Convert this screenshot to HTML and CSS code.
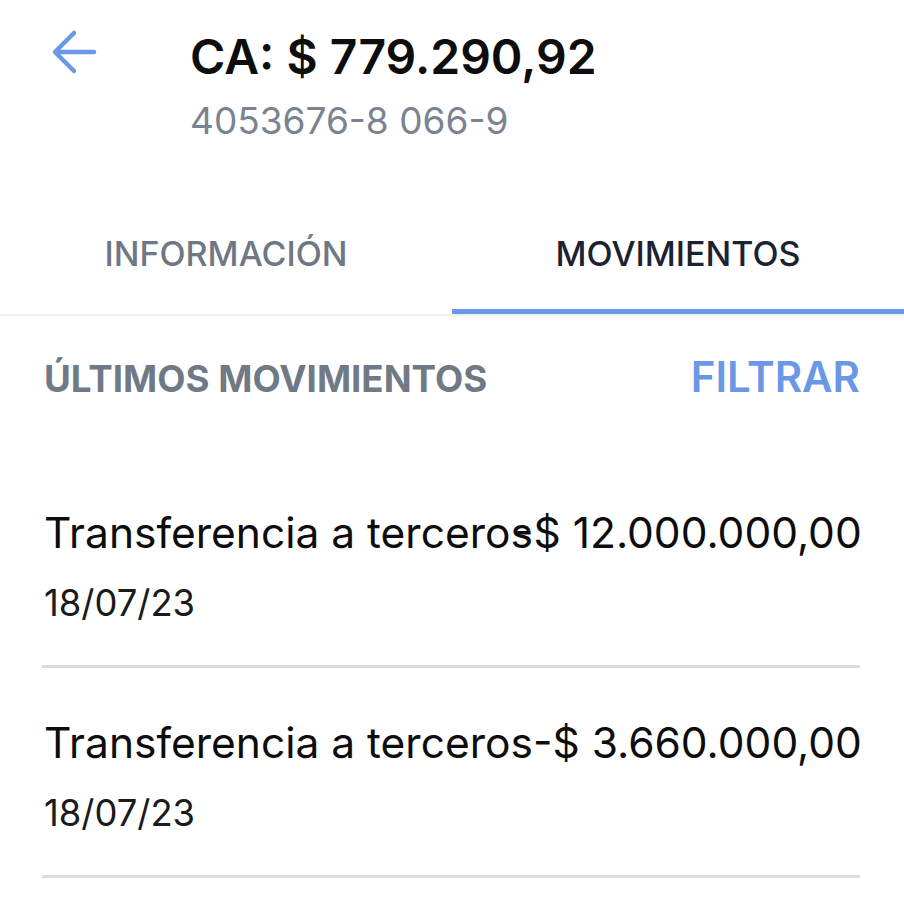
FILE: index.html
```html
<!DOCTYPE html>
<html lang="es">
<head>
<meta charset="utf-8">
<title>Cuenta</title>
<link rel="stylesheet" href="styles.css">
</head>
<body>
<div class="screen">
  <header class="header">
    <button class="back" aria-label="Volver">
      <svg width="48" height="48" viewBox="0 0 48 48" fill="none" stroke="#6a98e6" stroke-width="4.5" stroke-linecap="round" stroke-linejoin="round">
        <path d="M6 24H44"/>
        <path d="M24 5L5 24L24 43"/>
      </svg>
    </button>
    <div class="account">
      <div class="balance">CA: $ 779.290,92</div>
      <div class="number">4053676-8 066-9</div>
    </div>
  </header>

  <nav class="tabs">
    <div class="tab">INFORMACIÓN</div>
    <div class="tab active">MOVIMIENTOS</div>
  </nav>

  <section class="section">
    <div class="section-head">
      <span class="section-title">ÚLTIMOS MOVIMIENTOS</span>
      <span class="filter">FILTRAR</span>
    </div>
    <ul class="moves">
      <li class="move">
        <div class="move-line"><span>Transferencia a terceros</span><span class="amount over">-$ 12.000.000,00</span></div>
        <div class="move-date">18/07/23</div>
      </li>
      <li class="move">
        <div class="move-line"><span>Transferencia a terceros</span><span class="amount">-$ 3.660.000,00</span></div>
        <div class="move-date">18/07/23</div>
      </li>
    </ul>
  </section>
</div>
</body>
</html>
```

FILE: styles.css
```css
* { box-sizing: border-box; }
html, body { margin: 0; padding: 0; background: #fff; }
body {
  font-family: Inter, Roboto, "Noto Sans", sans-serif;
  color: #111;
  width: 904px;
  height: 917px;
  overflow: hidden;
}
.screen { width: 904px; }

.header {
  display: flex;
  align-items: flex-start;
  padding: 27px 0 0 50px;
}
.back {
  border: 0;
  background: none;
  padding: 0;
  margin-top: 1px;
  width: 48px;
  height: 48px;
  display: block;
}
.back svg { display: block; }
.account { margin-left: 92px; }
.balance {
  font-size: 48px;
  font-weight: 600;
  line-height: 60px;
  color: #0d0d0d;
}
.number {
  margin-top: 9px;
  font-size: 37px;
  line-height: 50px;
  color: #7a8490;
}

.tabs {
  display: grid;
  grid-template-columns: 1fr 1fr;
  margin-top: 43px;
  box-shadow: 0 2px 2px rgba(0,0,0,0.08);
}
.tab {
  text-align: center;
  font-size: 34px;
  font-weight: 500;
  line-height: 35px;
  padding: 47px 0 38px;
  color: #6e7884;
  border-bottom: 5px solid transparent;
}
.tab.active {
  color: #1b2330;
  border-bottom-color: #6a98e6;
}

.section { padding: 0 44px 0 42px; }
.section-head {
  display: flex;
  justify-content: space-between;
  align-items: baseline;
  margin-top: 41px;
  padding-left: 2px;
  font-size: 36.7px;
  font-weight: 700;
  line-height: 44px;
}
.section-title { color: #707a86; }
.filter { color: #6a98e6; font-size: 42px; font-weight: 600; }

.moves {
  list-style: none;
  margin: 57px 0 0;
  padding: 0;
}
.move {
  padding: 50px 0 42px 2px;
  border-bottom: 3px solid #dcdcdc;
}
.move-line {
  display: flex;
  font-size: 42.5px;
  line-height: 50px;
  color: #0d0d0d;
  white-space: nowrap;
}
.amount.over { margin-left: -19px; }
.move-date {
  margin-top: 25px;
  font-size: 36.4px;
  line-height: 40px;
  color: #1a1a1a;
}
```
